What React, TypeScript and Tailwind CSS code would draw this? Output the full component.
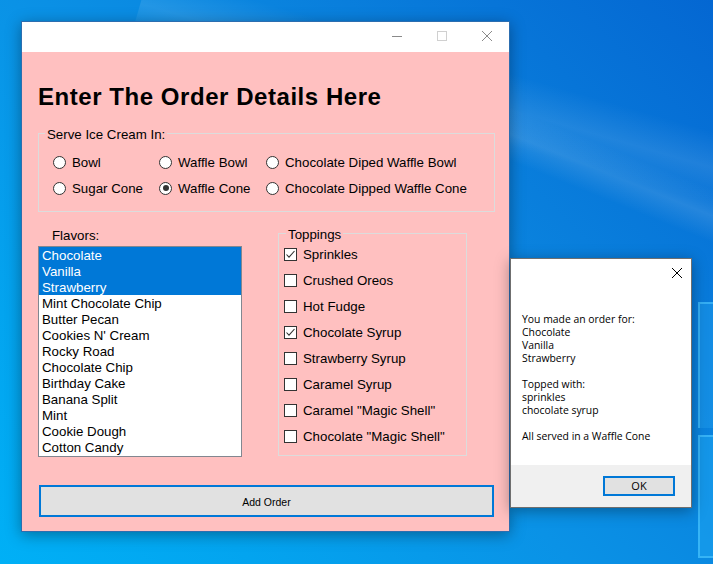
import React from "react";

const flavors = [
  "Chocolate",
  "Vanilla",
  "Strawberry",
  "Mint Chocolate Chip",
  "Butter Pecan",
  "Cookies N' Cream",
  "Rocky Road",
  "Chocolate Chip",
  "Birthday Cake",
  "Banana Split",
  "Mint",
  "Cookie Dough",
  "Cotton Candy",
];

const toppings: [string, boolean][] = [
  ["Sprinkles", true],
  ["Crushed Oreos", false],
  ["Hot Fudge", false],
  ["Chocolate Syrup", true],
  ["Strawberry Syrup", false],
  ["Caramel Syrup", false],
  ['Caramel "Magic Shell"', false],
  ['Chocolate "Magic Shell"', false],
];

function Radio({ label, checked }: { label: string; checked?: boolean }) {
  return (
    <div className="flex items-center h-[20px]">
      <span className="w-[13px] h-[13px] rounded-full border border-[#333333] bg-white flex items-center justify-center shrink-0">
        {checked && <span className="w-[6px] h-[6px] rounded-full bg-[#333333]" />}
      </span>
      <span className="relative top-[1px] ml-[6px] text-[13.3px] leading-[16px] text-black whitespace-nowrap">{label}</span>
    </div>
  );
}

function Check({ label, checked }: { label: string; checked?: boolean }) {
  return (
    <div className="flex items-center h-[20px]">
      <span className="w-[13px] h-[13px] border border-[#333333] bg-white flex items-center justify-center shrink-0">
        {checked && (
          <svg width="11" height="11" viewBox="0 0 11 11">
            <path d="M1.5 5.5 L4 8.2 L9.5 2" stroke="#333333" strokeWidth="1.1" fill="none" />
          </svg>
        )}
      </span>
      <span className="relative top-[1px] ml-[6px] text-[13.3px] leading-[16px] text-black whitespace-nowrap">{label}</span>
    </div>
  );
}

export default function App() {
  return (
    <div className="relative w-[713px] h-[564px] overflow-hidden bg-[linear-gradient(225deg,#0467d2_0%,#0a83de_35%,#0a92e6_55%,#03a4ef_80%,#00b0f6_100%)] font-['Liberation_Sans',Arial,sans-serif]">
      {/* wallpaper light beams */}
      <div className="absolute left-[150px] top-[-30px] w-[800px] h-[70px] rotate-[16deg] origin-top-left bg-[linear-gradient(180deg,rgba(255,255,255,0)_0%,rgba(255,255,255,0.10)_50%,rgba(255,255,255,0)_100%)]" />
      <div className="absolute left-[480px] top-[95px] w-[400px] h-[50px] rotate-[22deg] origin-top-left bg-[linear-gradient(180deg,rgba(255,255,255,0)_0%,rgba(255,255,255,0.12)_50%,rgba(255,255,255,0)_100%)]" />
      {/* wallpaper panes */}
      <div className="absolute left-[698px] top-[302px] w-[30px] h-[126px] border-l-2 border-t-2 border-[#4cc6ff]/60 bg-[#1a96e8]/60" />
      <div className="absolute left-[698px] top-[435px] w-[30px] h-[123px] border-l-2 border-t-2 border-b-2 border-[#4cc6ff]/60 bg-[#1aa2ee]/60" />

      {/* main window */}
      <div className="absolute left-[21px] top-[21px] w-[489px] h-[511px] border border-[#2c6eb0] bg-[#ffc0c0] shadow-[0_3px_14px_rgba(0,0,0,0.35)] flex flex-col">
        <div className="h-[30px] bg-white flex justify-end shrink-0">
          <div className="w-[45px] h-full flex justify-center pt-[9px]">
            <svg width="10" height="10" viewBox="0 0 10 10">
              <line x1="0" y1="5.5" x2="10" y2="5.5" stroke="#8a8a8a" strokeWidth="1" />
            </svg>
          </div>
          <div className="w-[45px] h-full flex justify-center pt-[9px]">
            <svg width="10" height="10" viewBox="0 0 10 10">
              <rect x="0.5" y="0.5" width="9" height="9" stroke="#d0d0d0" strokeWidth="1" fill="none" />
            </svg>
          </div>
          <div className="w-[45px] h-full flex justify-center pt-[9px]">
            <svg width="10" height="10" viewBox="0 0 10 10">
              <path d="M0 0 L10 10 M10 0 L0 10" stroke="#8a8a8a" strokeWidth="1" />
            </svg>
          </div>
        </div>

        <div className="flex flex-col">
          <h1 className="ml-[16px] mt-[31px] h-[28px] text-[24px] leading-[28px] font-bold tracking-[0.55px] text-black whitespace-nowrap">
            Enter The Order Details Here
          </h1>

          <div className="relative ml-[16px] mt-[22px] w-[457px] h-[79px] border border-[#dcdcdc]">
            <span className="absolute left-[6px] top-[-7px] px-[2px] bg-[#ffc0c0] text-[13.3px] leading-[16px] text-black whitespace-nowrap">
              Serve Ice Cream In:
            </span>
            <div className="pt-[18px] pl-[14px] grid grid-cols-[106px_107px_1fr] gap-y-[6px]">
              <Radio label="Bowl" />
              <Radio label="Waffle Bowl" />
              <Radio label="Chocolate Diped Waffle Bowl" />
              <Radio label="Sugar Cone" />
              <Radio label="Waffle Cone" checked />
              <Radio label="Chocolate Dipped Waffle Cone" />
            </div>
          </div>

          <div className="mt-[15px] flex items-start">
            <div className="ml-[16px] w-[204px] flex flex-col">
              <span className="ml-[14px] h-[16px] text-[13.3px] leading-[18px] text-black">Flavors:</span>
              <div className="mt-[3px] w-[204px] h-[211px] border border-[#828790] bg-white overflow-hidden">
                {flavors.map((f, i) => (
                  <div
                    key={f}
                    className={
                      i < 3
                        ? "h-[16px] pl-[3px] text-[13.3px] leading-[18px] bg-[#0078d7] text-white whitespace-nowrap"
                        : "h-[16px] pl-[3px] text-[13.3px] leading-[18px] text-black whitespace-nowrap"
                    }
                  >
                    {f}
                  </div>
                ))}
              </div>
            </div>

            <div className="relative ml-[36px] mt-[6px] w-[189px] h-[223px] border border-[#dcdcdc]">
              <span className="absolute left-[7px] top-[-7px] px-[2px] bg-[#ffc0c0] text-[13.3px] leading-[16px] text-black">
                Toppings
              </span>
              <div className="pt-[10px] pl-[5px] flex flex-col gap-[6px]">
                {toppings.map(([t, c]) => (
                  <Check key={t} label={t} checked={c} />
                ))}
              </div>
            </div>
          </div>

          <button className="ml-[17px] mt-[28px] w-[455px] h-[32px] pt-[4px] border-2 border-[#0078d7] bg-[#e1e1e1] text-[10.5px] text-black flex items-center justify-center">
            Add Order
          </button>
        </div>
      </div>

      {/* message box */}
      <div className="absolute left-[510px] top-[258px] w-[182px] h-[250px] border border-[#6f6f6f] bg-white shadow-[0_3px_14px_rgba(0,0,0,0.35)] flex flex-col font-['Open_Sans','Noto_Sans',sans-serif]">
        <div className="h-[206px] flex flex-col">
          <div className="flex justify-end pt-[9px] pr-[9px]">
            <svg width="10" height="10" viewBox="0 0 10 10">
              <path d="M0 0 L10 10 M10 0 L0 10" stroke="#000000" strokeWidth="1" />
            </svg>
          </div>
          <div className="ml-[11px] mt-[35px] text-[10.4px] leading-[13px] text-black whitespace-nowrap">
            <div className="h-[13px]">You made an order for:</div>
            <div className="h-[13px]">Chocolate</div>
            <div className="h-[13px]">Vanilla</div>
            <div className="h-[13px]">Strawberry</div>
            <div className="h-[13px]" />
            <div className="h-[13px]">Topped with:</div>
            <div className="h-[13px]">sprinkles</div>
            <div className="h-[13px]">chocolate syrup</div>
            <div className="h-[13px]" />
            <div className="h-[13px]">All served in a Waffle Cone</div>
          </div>
        </div>
        <div className="h-[42px] bg-[#f0f0f0] flex justify-end items-start pt-[11px] pr-[16px]">
          <div className="w-[72px] h-[20px] border-2 border-[#0078d7] bg-[#e1e1e1] text-[11px] leading-[16px] text-black flex items-center justify-center">
            OK
          </div>
        </div>
      </div>
    </div>
  );
}
